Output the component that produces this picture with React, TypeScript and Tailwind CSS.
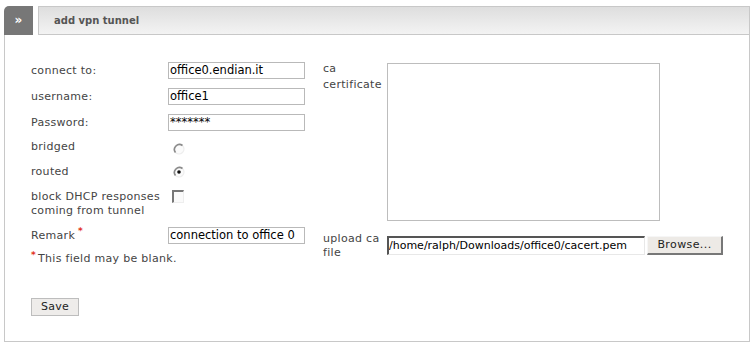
import React from "react";

function Radio({ checked }: { checked?: boolean }) {
  return (
    <svg width="12" height="12" viewBox="0 0 12 12" className="block">
      <circle cx="6" cy="6" r="5" fill="#fbfbfb" stroke="#eee" strokeWidth="1.2" />
      <path d="M9.5 2.5 A5 5 0 0 0 2.5 9.5" fill="none" stroke="#8a8a8a" strokeWidth="1.6" />
      {checked && <circle cx="6" cy="6" r="1.8" fill="#111" />}
    </svg>
  );
}

function Star() {
  return <span className="relative -top-[5px] ml-[3px] text-[9px] font-bold text-[#e2321a]">*</span>;
}

export default function App() {
  const label = "text-[#444] tracking-[0.3px]";
  const input =
    "w-[137px] h-[17px] border border-[#b9b9b9] bg-white px-[1px] text-[11.5px] leading-[15px] text-black whitespace-nowrap overflow-hidden";

  return (
    <div
      className="w-[754px] h-[348px] bg-white text-[11px]"
      style={{ fontFamily: '"DejaVu Sans", Verdana, sans-serif' }}
    >
      <div className="pt-[6px] pl-[4px] flex gap-[5px]">
        <div className="w-[29px] h-[29px] bg-[#777] rounded-tl-[5px] flex items-center justify-center text-white font-bold text-[12px] pb-[2px]">
          »
        </div>
        <div className="w-[712px] h-[29px] border border-[#c8c8c8] bg-gradient-to-b from-[#dedede] to-[#f3f3f3] flex items-center pl-[15px] text-[10px] font-bold text-[#555]">
          add vpn tunnel
        </div>
      </div>

      <div className="ml-[4px] w-[746px] h-[307px] border-l border-r border-b border-[#c8c8c8] pl-[26px] pt-[27px]">
        <div className="flex gap-[18px]">
          {/* left column */}
          <div className="flex flex-col w-[274px]">
            {[
              ["connect to:", "office0.endian.it"],
              ["username:", "office1"],
              ["Password:", "*******"],
            ].map(([l, v]) => (
              <div key={l} className="flex h-[26px] items-start">
                <div className={`w-[137px] leading-[17px] ${label}`}>{l}</div>
                <div className={input}>{v}</div>
              </div>
            ))}
            <div className="flex h-[25px] items-start">
              <div className={`w-[142px] leading-[14px] ${label}`}>bridged</div>
              <div className="pt-[3px]">
                <Radio />
              </div>
            </div>
            <div className="flex h-[25px] items-start">
              <div className={`w-[142px] leading-[14px] ${label}`}>routed</div>
              <div className="pt-[1px]">
                <Radio checked />
              </div>
            </div>
            <div className="flex h-[37px] items-start">
              <div className={`w-[141px] leading-[14px] ${label}`}>
                block DHCP responses
                <br />
                coming from tunnel
              </div>
              <div className="w-[12px] h-[13px] border-t-2 border-l-2 border-t-[#777] border-l-[#777] border-r border-b border-r-[#eee] border-b-[#eee] bg-[#fafafa]" />
            </div>
            <div className="flex h-[25px] items-start">
              <div className={`w-[137px] leading-[17px] ${label}`}>
                Remark
                <Star />
              </div>
              <div className={input}>connection to office 0</div>
            </div>
            <div className={`leading-[14px] ${label}`}>
              <span className="relative -top-[4px] mr-[2px] text-[9px] font-bold text-[#e2321a]">*</span>
              This field may be blank.
            </div>
          </div>

          {/* right column */}
          <div className="flex flex-col">
            <div className="flex h-[172px]">
              <div className={`w-[64px] leading-[16px] -mt-[1px] ${label}`}>
                ca
                <br />
                certificate
              </div>
              <div className="mt-[1px] w-[273px] h-[158px] border border-[#bdbdbd] bg-white" />
            </div>
            <div className="flex">
              <div className={`w-[64px] leading-[14px] -mt-[2px] ${label}`}>
                upload ca
                <br />
                file
              </div>
              <div className="flex items-center h-[19px] mt-[2px]">
                <div className="w-[258px] h-[19px] border-t-2 border-l-2 border-t-[#555] border-l-[#555] border-b border-r border-b-[#e8e8e8] border-r-[#e8e8e8] bg-white text-[11px] leading-[15px] text-black overflow-hidden whitespace-nowrap">
                  /home/ralph/Downloads/office0/cacert.pem
                </div>
                <button className="ml-[2px] w-[76px] h-[19px] bg-[#edeae6] border border-t-[#f6f6f6] border-l-[#f6f6f6] border-r-2 border-b-2 border-r-[#777] border-b-[#777] text-[11px] text-[#222] tracking-[0.4px] leading-[14px]">
                  Browse...
                </button>
              </div>
            </div>
          </div>
        </div>

        <button className="mt-[32px] w-[48px] h-[18px] bg-[#eeecea] border border-[#bdbdbd] text-[11px] text-[#222] leading-[14px] tracking-[0.3px]">
          Save
        </button>
      </div>
    </div>
  );
}
